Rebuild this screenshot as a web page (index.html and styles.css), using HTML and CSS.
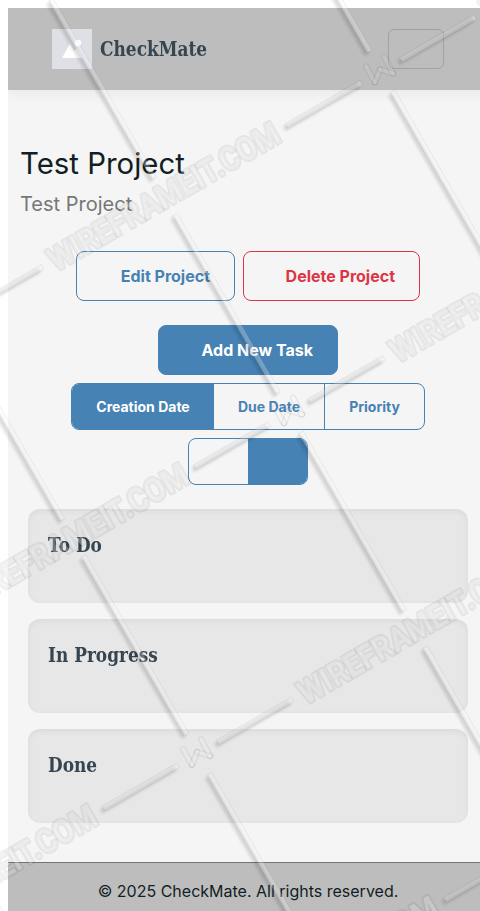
FILE: index.html
```html
<!DOCTYPE html>
<html lang="en">
<head>
<meta charset="utf-8">
<title>CheckMate</title>
<link rel="stylesheet" href="styles.css">
</head>
<body>
<div class="page">
  <header class="header">
    <svg class="logo" viewBox="0 0 40 40"><rect width="40" height="40" fill="#dfe0e6"/><path d="M10 29 17.8 15 22.3 22 25 19.5 30.5 29Z" fill="#fff"/><circle cx="26" cy="14" r="3.2" fill="#fff"/></svg>
    <span class="slab brand">CheckMate</span>
    <button class="toggler" aria-label="Menu"></button>
  </header>
  <main class="main">
    <h1 class="title">Test Project</h1>
    <p class="subtitle">Test Project</p>
    <div class="actions">
      <button class="btn edit">Edit Project</button>
      <button class="btn delete">Delete Project</button>
    </div>
    <button class="btn add">Add New Task</button>
    <div class="group sort">
      <button class="active">Creation Date</button>
      <button>Due Date</button>
      <button>Priority</button>
    </div>
    <div class="group order">
      <button aria-label="Ascending"></button>
      <button class="active" aria-label="Descending"></button>
    </div>
    <div class="columns">
      <section class="card"><h2 class="slab">To Do</h2></section>
      <section class="card"><h2 class="slab">In Progress</h2></section>
      <section class="card"><h2 class="slab">Done</h2></section>
    </div>
  </main>
  <footer class="footer">© 2025 CheckMate. All rights reserved.</footer>
</div>
<svg class="watermark" width="480" height="911" viewBox="0 0 480 911">
  <defs>
    <filter id="soft" x="-20%" y="-20%" width="140%" height="140%"><feGaussianBlur stdDeviation="1.6"/></filter>
    <g id="bars">
      <rect x="23" y="-2.5" width="86" height="5"/>
      <rect x="391" y="-2.5" width="86" height="5"/>
      <rect x="-2.5" y="23" width="5" height="206"/>
      <rect x="-2.5" y="271" width="5" height="206"/>
    </g>
    <g id="marks">
      <text class="wm-text" x="250" y="12" text-anchor="middle" textLength="262" lengthAdjust="spacingAndGlyphs">WIREFRAMEIT.COM</text>
      <g transform="rotate(30)" class="wm-w">
        <rect x="-2.5" y="-2.5" width="23" height="5" rx="2.5" transform="translate(-14 -5) rotate(60.6)"/>
        <rect x="-2.5" y="-2.5" width="19" height="5" rx="2.5" transform="translate(-5 11) rotate(-69)"/>
        <rect x="-2.5" y="-2.5" width="19" height="5" rx="2.5" transform="translate(0 -2) rotate(17)"/>
        <rect x="-2.5" y="-2.5" width="24" height="5" rx="2.5" transform="translate(4 -15) rotate(62)"/>
      </g>
    </g>
    <g id="bar-net">
      <use href="#bars" transform="translate(472.5 -270) rotate(-30)"/>
      <use href="#bars" transform="translate(131 -361.5) rotate(-30)"/>
      <use href="#bars" transform="translate(39.5 -20) rotate(-30)"/>
      <use href="#bars" transform="translate(-302 -111.5) rotate(-30)"/>
      <use href="#bars" transform="translate(381 71.5) rotate(-30)"/>
      <use href="#bars" transform="translate(-52 321.5) rotate(-30)"/>
      <use href="#bars" transform="translate(289.5 412.5) rotate(-30)"/>
      <use href="#bars" transform="translate(-143.5 662.5) rotate(-30)"/>
      <use href="#bars" transform="translate(198 754) rotate(-30)"/>
      <use href="#bars" transform="translate(-235 1004) rotate(-30)"/>
      <use href="#bars" transform="translate(106.5 1095.5) rotate(-30)"/>
    </g>
  </defs>
  <use href="#bar-net" class="wm-shadow" transform="translate(-2.5 3)" filter="url(#soft)"/>
  <use href="#bar-net" class="wm-face"/>
  <use href="#marks" transform="translate(-53 321) rotate(-30)"/>
  <use href="#marks" transform="translate(380 71.5) rotate(-30)"/>
  <use href="#marks" transform="translate(289 412.5) rotate(-30)"/>
  <use href="#marks" transform="translate(-144.5 662) rotate(-30)"/>
  <use href="#marks" transform="translate(197 754) rotate(-30)"/>
  <use href="#marks" transform="translate(-236 1003.5) rotate(-30)"/>
  <use href="#marks" transform="translate(105.5 1095) rotate(-30)"/>
</svg>
</body>
</html>
```
FILE: styles.css
```css
* { box-sizing: border-box; }
html { background: #fff; overflow: hidden; }
body { margin: 8px 0 0 8px; font-family: Inter, sans-serif; color: #131d24; }
.page { width: 480px; height: 903px; background: #f5f5f5; display: flex; flex-direction: column; }
.header { height: 82px; flex: none; background: #bdbdbd; display: flex; align-items: center; padding: 0 44px; box-shadow: 0 4px 12px rgba(0,0,0,.05); }
.logo { width: 40px; height: 40px; margin-right: 8px; }
.slab { font-family: "Roboto Slab", "DejaVu Serif", serif; font-weight: 700; font-size: 19.5px; line-height: 26px; color: #36454f; white-space: nowrap; transform-origin: left; transform: scaleX(.87); width: max-content; }
.brand { display: block; padding-top: 2px; }
.toggler { margin-left: auto; width: 56px; height: 40px; border: 1px solid #a2a2a2; border-radius: 6px; background: none; }
.main { flex: 1; display: flex; flex-direction: column; align-items: center; padding: 56px 12px 0; }
.title { align-self: flex-start; margin: 0; font-size: 29.4px; line-height: 36px; font-weight: 400; }
.subtitle { align-self: flex-start; margin: 8px 0 0; font-size: 20px; line-height: 28px; color: #777; }
.actions { display: flex; gap: 8px; margin-top: 33px; }
.btn { height: 50px; border: 1px solid currentColor; border-radius: 8px; background: none; font: 700 16px/24px Inter, sans-serif; padding: 0 24px; text-align: right; white-space: nowrap; }
.edit { width: 159px; color: #4682b4; }
.delete { width: 177px; color: #dc3545; }
.add { width: 180px; margin-top: 24px; background: #4682b4; border-color: #4682b4; color: #fff; }
.group { display: flex; height: 47px; margin-top: 8px; border: 1px solid #4682b4; border-radius: 8px; overflow: hidden; }
.group button { border: 0; padding: 0; background: none; color: #4682b4; font: 700 14px/21px Inter, sans-serif; }
.group .active { background: #4682b4; color: #fff; }
.sort { width: 354px; }
.sort button { width: 110px; }
.sort button:first-child { width: 142px; }
.sort button:last-child { width: 100px; border-left: 1px solid #4682b4; }
.order { width: 120px; }
.order button { width: 59px; }
.columns { align-self: stretch; display: flex; flex-direction: column; gap: 16px; padding: 24px 8px 0; }
.card { height: 94px; border-radius: 12px; padding: 24px 20px; background: #e7e7e7; box-shadow: inset 0 2px 6px rgba(0,0,0,.06); }
.card .slab { margin: 0; }
.footer { height: 49px; flex: none; background: #bdbdbd; border-top: 1px solid #747474; text-align: center; font-size: 16px; line-height: 24px; padding-top: 16px; }
.watermark { position: absolute; left: 0; top: 0; pointer-events: none; font: 700 33px Roboto, sans-serif; }
.wm-shadow { fill: #000; opacity: .13; }
.wm-face { fill: rgba(255,255,255,.26); stroke: rgba(0,0,0,.05); stroke-width: 1.2px; }
.wm-text { paint-order: stroke; fill: rgba(255,255,255,.28); stroke: rgba(0,0,0,.08); stroke-width: 4px; stroke-linejoin: round; }
.wm-w { fill: rgba(255,255,255,.08); stroke: rgba(0,0,0,.07); stroke-width: 1.2px; }
```
